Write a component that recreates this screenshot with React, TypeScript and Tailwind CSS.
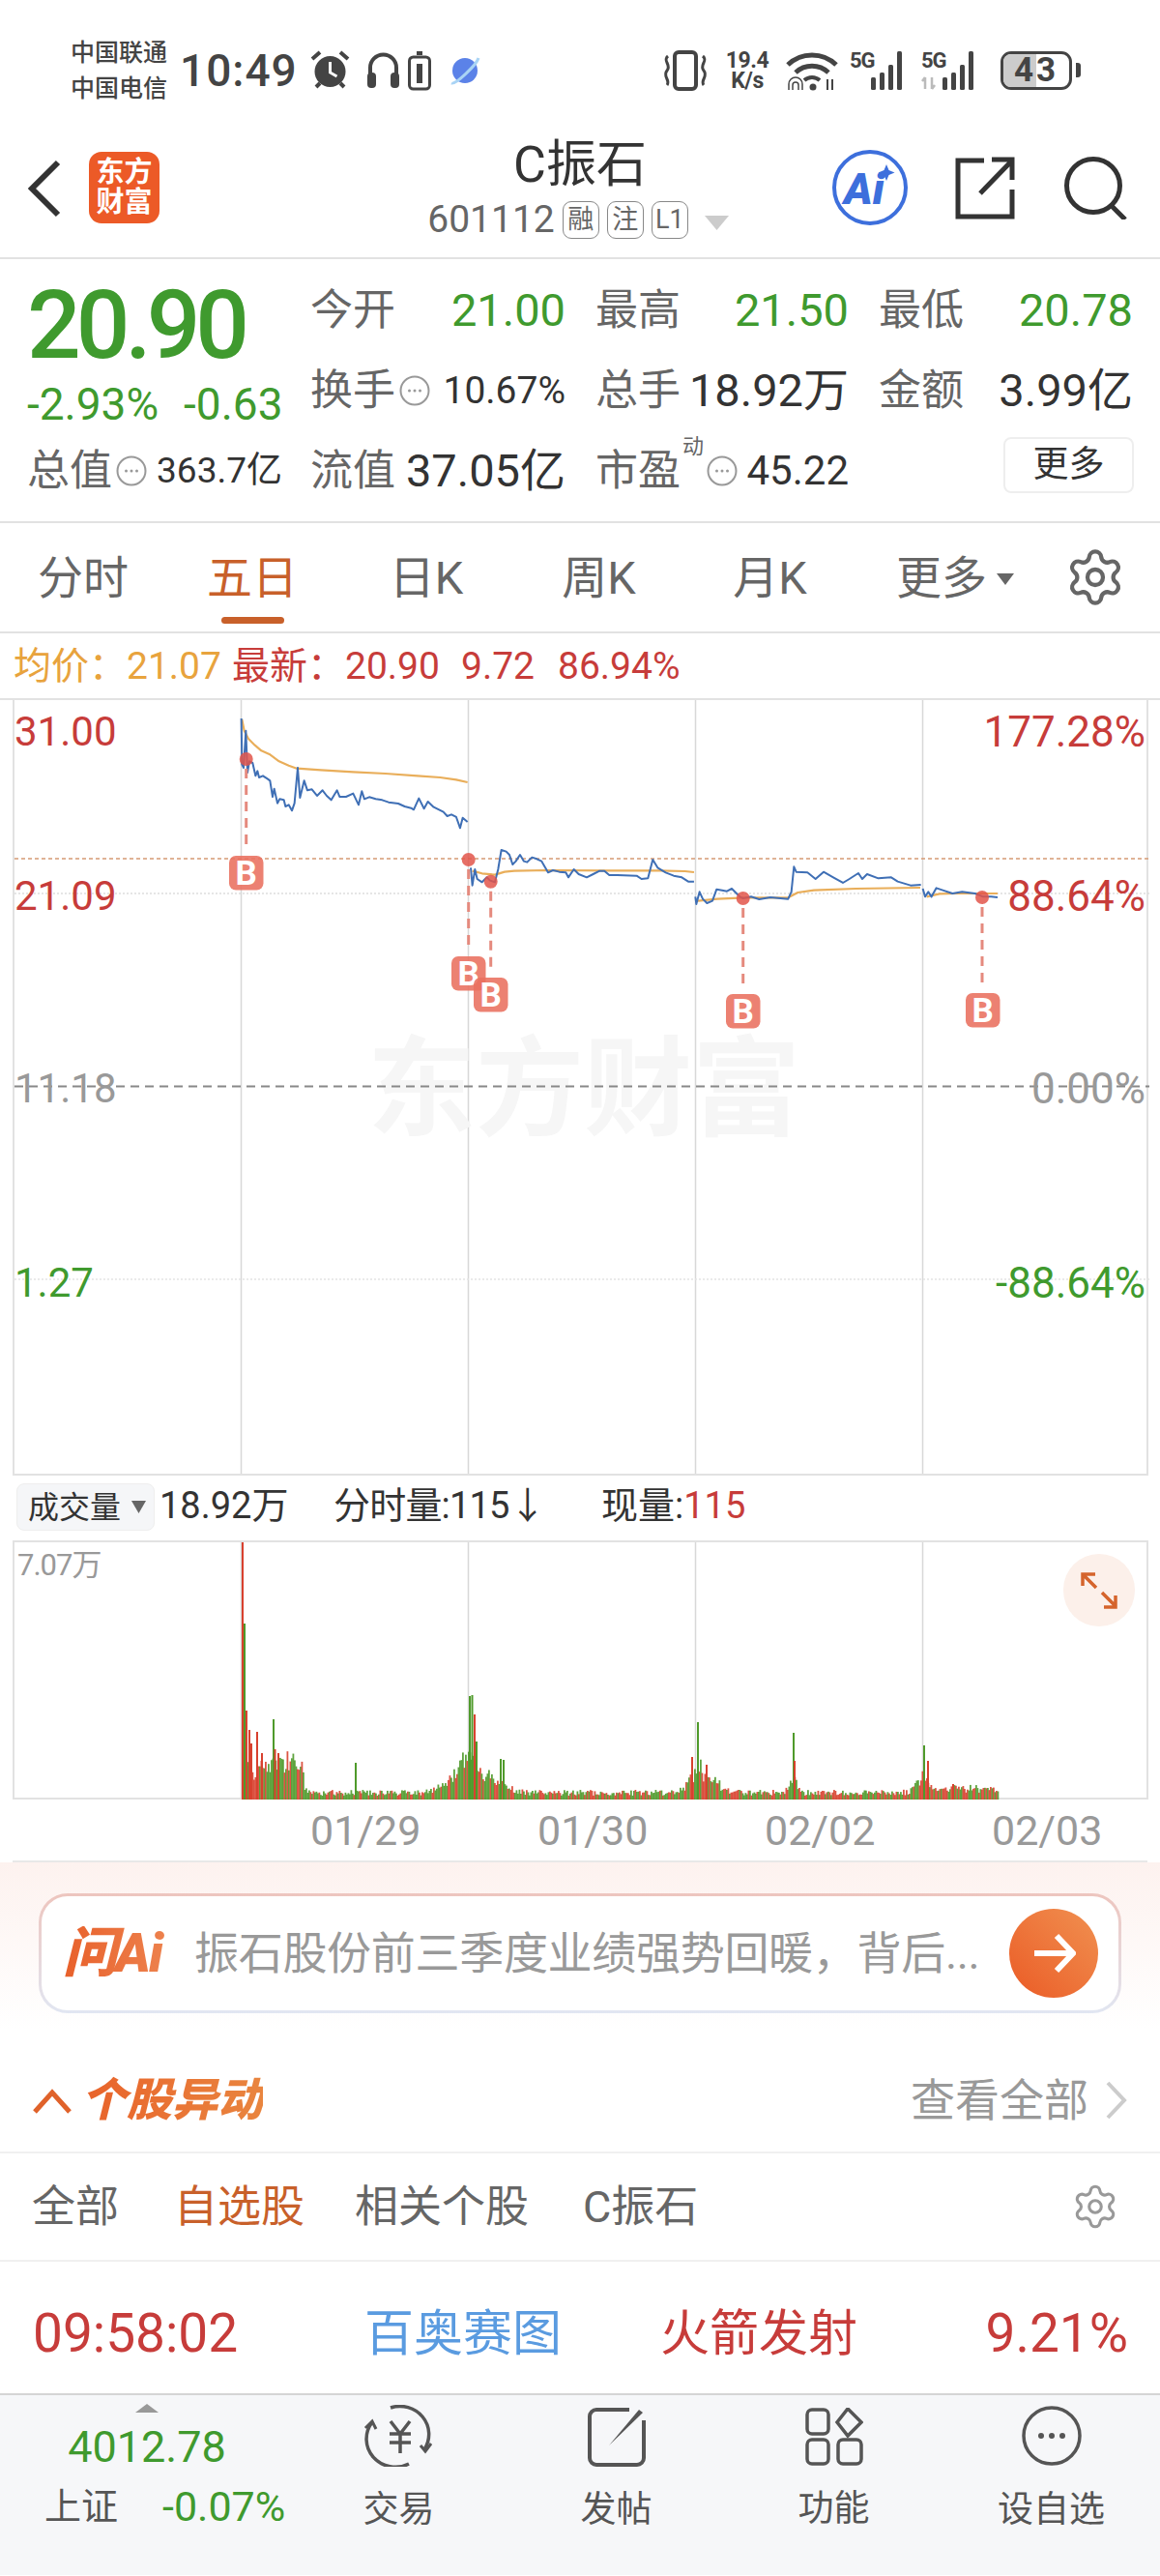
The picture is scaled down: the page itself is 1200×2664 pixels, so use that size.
import { Settings } from "lucide-react";

const RED = "#C73C3A";
const GREEN = "#3F9A2E";

// price lines, traced in crop coordinates (3x)
const blueA = "M53 72L55 215L60 225L67 110L72 240L78 205L88 210L97 250L103 235L108 255L120 250L135 260L142 265L150 315L155 290L165 335L172 322L185 325L190 345L200 340L210 358L218 335L228 225L235 318L248 265L258 295L272 292L288 312L305 295L318 312L332 325L350 295L358 315L378 315L400 305L417 340L427 298L435 322L450 316L470 322L490 325L510 332L540 336L560 345L580 350L588 355L604 320L620 352L632 330L650 347L680 362L692 375L705 370L720 378L732 412L740 380L755 393";
const orangeA = "M55 75L62 110L75 135L95 155L115 172L140 183L170 205L200 218L225 227L300 232L400 238L500 243L600 250L670 255L720 262L755 270";
const blueB = "M765 535L770 590L778 540L785 570L800 580L815 565L825 575L840 580L850 540L860 480L875 485L885 495L895 525L905 515L918 495L930 515L940 518L955 503L970 508L985 515L1005 550L1020 543L1040 548L1060 550L1068 565L1085 540L1100 555L1125 565L1145 555L1165 545L1180 545L1195 558L1220 558L1280 560L1295 570L1315 568L1330 510L1345 535L1370 550L1395 560L1420 565L1440 578L1458 578";
const orangeB = "M770 545L800 553L840 557L870 548L900 545L1000 543L1200 544L1350 544L1430 546L1458 549";
const blueC = "M52 205L55 228L65 190L75 212L88 225L105 218L118 182L135 185L150 188L165 180L180 195L190 205L200 210L225 205L250 213L285 207L340 212L350 190L358 112L365 128L400 130L425 150L450 128L480 145L510 162L530 150L558 132L570 150L585 135L620 148L660 145L680 158L720 170L752 168";
const orangeC = "M60 218L120 212L200 208L340 208L370 192L420 185L550 180L750 177";
const blueD = "M758 180L765 205L775 190L785 205L800 178L820 185L850 195L880 190L920 195L945 205L970 205L990 207";
const orangeD = "M770 205L810 196L860 195L940 195L990 195";

const trades = [
  { x: 252.7, y: 786, bx: 235, by: 886 },
  { x: 482.7, y: 890, bx: 465, by: 990 },
  { x: 505.7, y: 912.7, bx: 488, by: 1012 },
  { x: 766.7, y: 930, bx: 749, by: 1029 },
  { x: 1014, y: 929, bx: 997, by: 1028 },
];

// volume bars
let seed = 7;
const rnd = () => {
  seed = (seed * 16807) % 2147483647;
  return seed / 2147483647;
};
const bumps = [
  [295, 14, 12],
  [482, 12, 32],
  [470, 20, 20],
  [505, 18, 20],
  [719, 12, 30],
  [735, 15, 12],
  [818, 5, 24],
  [950, 8, 20],
  [975, 25, 5],
  [1012, 25, 6],
];
const spikes: [number, number, string][] = [
  [248, 266, "#D8412F"],
  [250, 182, "#4F9A2B"],
  [252, 92, "#D8412F"],
  [255, 72, "#D8412F"],
  [257, 58, "#D8412F"],
  [263, 70, "#D8412F"],
  [268, 48, "#D8412F"],
  [280, 83, "#4F9A2B"],
  [281.5, 52, "#D8412F"],
  [285, 48, "#D8412F"],
  [365, 38, "#4F9A2B"],
  [483, 107, "#4F9A2B"],
  [485.5, 108, "#4F9A2B"],
  [488, 88, "#D8412F"],
  [490, 60, "#4F9A2B"],
  [515, 42, "#4F9A2B"],
  [518, 41, "#4F9A2B"],
  [719, 80, "#4F9A2B"],
  [713, 44, "#D8412F"],
  [728, 36, "#D8412F"],
  [818, 69, "#4F9A2B"],
  [819, 40, "#D8412F"],
  [953, 56, "#4F9A2B"],
  [957, 40, "#D8412F"],
  [983, 16, "#D8412F"],
];
const bars: { x: number; h: number; c: string }[] = [];
for (let x = 248; x < 1030; x += 1.5) {
  let h = 4 + rnd() * 6;
  if (x < 312) h += 16 + rnd() * 16;
  for (const [c, w, a] of bumps) {
    const d = (x - c) / w;
    h += a * Math.exp(-d * d) * (0.4 + 0.6 * rnd());
  }
  bars.push({ x, h, c: rnd() > 0.45 ? "#4F9A2B" : "#D8412F" });
}

function Dots() {
  return (
    <svg width="32" height="32" viewBox="0 0 32 32" className="shrink-0">
      <circle cx="16" cy="16" r="14.5" fill="none" stroke="#999" strokeWidth="2" />
      <circle cx="10.5" cy="16" r="1.5" fill="#999" />
      <circle cx="16" cy="16" r="1.5" fill="#999" />
      <circle cx="21.5" cy="16" r="1.5" fill="#999" />
    </svg>
  );
}

function Signal({ arrows }: { arrows?: boolean }) {
  return (
    <div className="relative w-[64px] h-[42px]">
      <span className="absolute left-0 top-[-1px] text-[22px] leading-[24px] font-bold text-[#444] tracking-[-1px]">5G</span>
      <svg width="64" height="42" viewBox="0 0 64 42" className="absolute left-0 top-0">
        {arrows && <path d="M4 40V28M1 32l3-4M11 28v12M14 36l-3 4" stroke="#bbb" strokeWidth="2.5" fill="none" />}
        <g fill="#444">
          <rect x="22" y="28" width="5" height="13" rx="1.5" />
          <rect x="31" y="23" width="5" height="18" rx="1.5" />
          <rect x="40" y="15" width="5" height="26" rx="1.5" />
          <rect x="49" y="1" width="5" height="40" rx="1.5" />
        </g>
      </svg>
    </div>
  );
}

function StatusBar() {
  return (
    <div className="h-[125px] flex items-center pt-[20px] pl-[73px] text-[#444]">
      <div className="flex flex-col text-[25px] leading-[37px] font-medium w-[113px]">
        <span>中国联通</span>
        <span>中国电信</span>
      </div>
      <span className="text-[46px] font-medium leading-none tracking-[1px] w-[135px]">10:49</span>
      <svg width="41" height="41" viewBox="0 0 41 41" className="mr-[17px]">
        <circle cx="20.5" cy="22" r="16" fill="#444" />
        <path d="M20.5 12v11l7 4" stroke="#fff" strokeWidth="3" fill="none" />
        <path d="M2 9l8-7M39 9l-8-7M6 38l4-4M35 38l-4-4" stroke="#444" strokeWidth="4" />
      </svg>
      <svg width="35" height="40" viewBox="0 0 35 40" className="mr-[8px]">
        <path d="M4 26V17a13.5 13.5 0 0 1 27 0v9" stroke="#444" strokeWidth="4" fill="none" />
        <rect x="1" y="22" width="9" height="16" rx="4" fill="#444" />
        <rect x="25" y="22" width="9" height="16" rx="4" fill="#444" />
      </svg>
      <svg width="24" height="42" viewBox="0 0 24 42" className="mr-[19px]">
        <rect x="1.5" y="7" width="21" height="33" rx="4" fill="none" stroke="#444" strokeWidth="3" />
        <rect x="9" y="1" width="6" height="4" fill="#444" />
        <rect x="9" y="14" width="6" height="20" fill="#444" />
      </svg>
      <svg width="32" height="32" viewBox="0 0 32 32" className="mr-[187px]">
        <circle cx="16" cy="16" r="13" fill="#5B82E8" />
        <path d="M2 29C6 31 28 10 30 3" stroke="#A9D4F5" strokeWidth="3" fill="none" />
      </svg>
      <svg width="50" height="42" viewBox="0 0 50 42" className="mr-[13px]">
        <rect x="14" y="2" width="22" height="38" rx="4" fill="none" stroke="#444" strokeWidth="4" />
        <path d="M7 6c-6 5 4 9-1 15s4 10 0 15M43 6c6 5-4 9 1 15s-4 10 0 15" stroke="#444" strokeWidth="3" fill="none" />
      </svg>
      <div className="flex flex-col items-center w-[52px] mr-[13px] font-bold text-[23px] leading-[21px] tracking-[-0.5px]">
        <span>19.4</span>
        <span>K/s</span>
      </div>
      <svg width="56" height="42" viewBox="0 0 56 42" className="mr-[11px]">
        <path d="M3 15a36 36 0 0 1 50 0M11 23a25 25 0 0 1 34 0" stroke="#444" strokeWidth="5" fill="none" />
        <path d="M20 31a12 12 0 0 1 16 0" stroke="#444" strokeWidth="4" fill="none" />
        <circle cx="29" cy="38" r="3.5" fill="#444" />
        <path d="M4 41v-6a7 7 0 0 1 14 0v6M8 41v-5a3 3 0 0 1 6 0v5" stroke="#444" strokeWidth="1.5" fill="none" />
        <path d="M44 41V30M49 30v11" stroke="#444" strokeWidth="2" />
      </svg>
      <Signal />
      <div className="ml-[10px]">
        <Signal arrows />
      </div>
      <div className="relative w-[74px] h-[40px] ml-[18px] rounded-[11px] border-[3px] border-[#444] overflow-hidden bg-white">
        <div className="w-[34px] h-full bg-[#ccc]" />
        <span className="absolute inset-0 flex items-center justify-center text-[35px] font-bold tracking-[3px] leading-none">43</span>
      </div>
      <div className="w-[5px] h-[15px] ml-[4px] rounded-r-[3px] bg-[#444]" />
    </div>
  );
}

function NavBar() {
  return (
    <div className="h-[143px] flex items-start border-b-2 border-[#e2e2e2]">
      <svg width="40" height="60" viewBox="0 0 40 60" className="ml-[27px] mt-[40px] shrink-0">
        <path d="M33 3L6 30l27 27" stroke="#333" strokeWidth="6" fill="none" />
      </svg>
      <div className="ml-[25px] mt-[32px] w-[73px] h-[74px] rounded-[13px] bg-[#EC5A27] text-white flex flex-col items-center justify-center text-[29px] leading-[31px] font-bold shrink-0">
        <span>东方</span>
        <span>财富</span>
      </div>
      <div className="w-[688px] ml-[9px] pl-[164px] flex flex-col items-center">
        <span className="text-[52px] leading-[60px] mt-[16px] text-[#333]">C振石</span>
        <div className="flex items-center mt-[6px] h-[40px] text-[#666] pr-[4px]">
          <span className="text-[39px] leading-none mr-[8px]">601112</span>
          {["融", "注", "L1"].map((t) => (
            <span key={t} className="h-[39px] min-w-[38px] px-[3px] mr-[8px] rounded-[9px] border border-[#888] flex items-center justify-center text-[27px] leading-none">
              {t}
            </span>
          ))}
          <svg width="25" height="15" viewBox="0 0 25 15" className="ml-[9px] mt-[6px]">
            <path d="M0 0h25L12.5 15z" fill="#ccc" />
          </svg>
        </div>
      </div>
      <svg width="80" height="80" viewBox="0 0 80 80" className="ml-[-2px] mt-[29px] shrink-0">
        <circle cx="40" cy="40" r="37" fill="none" stroke="#3D6FDC" strokeWidth="4" />
        <text x="13" y="57" fontSize="45" fontWeight="900" fontStyle="italic" fill="#3D6FDC" fontFamily="Roboto">Ai</text>
        <path d="M57 16l2.5 6 6 2.500-6 2.500-2.500 6-2.500-6-6-2.500 6-2.500z" fill="#3D6FDC" />
      </svg>
      <svg width="63" height="65" viewBox="0 0 63 65" className="ml-[48px] mt-[37px] shrink-0">
        <path d="M30 4H3v58h56V34M26 38L59 4M38 3h21v21" stroke="#333" strokeWidth="5" fill="none" />
      </svg>
      <svg width="68" height="66" viewBox="0 0 68 66" className="ml-[49px] mt-[36px] shrink-0">
        <circle cx="31" cy="31" r="27.500" fill="none" stroke="#333" strokeWidth="5" />
        <path d="M50 52l14 14" stroke="#333" strokeWidth="5" />
      </svg>
    </div>
  );
}

function Metric({ label, value, color, small, dots, sup }: { label: string; value: string; color: string; small?: string; dots?: boolean; sup?: boolean }) {
  return (
    <div className="flex items-center">
      <span className="text-[44px] leading-[50px] text-[#666]">{label}</span>
      {sup && <span className="text-[22px] leading-[24px] text-[#666] self-start mt-[-12px] ml-[2px]">动</span>}
      {dots && (
        <span className={sup ? "ml-[3px]" : "ml-[4px]"}>
          <Dots />
        </span>
      )}
      <span className={`ml-auto leading-[50px] ${small ?? "text-[47px]"}`} style={{ color }}>
        {value}
      </span>
    </div>
  );
}

function Quote() {
  return (
    <div className="h-[273px] border-b-2 border-[#e2e2e2] pt-[13px] grid grid-cols-[321px_295px_293px_291px] grid-rows-[82px_83px_83px]">
      <div className="row-span-2 pl-[28px] flex flex-col">
        <span className="text-[98px] leading-[108px] font-medium mt-[2px] tracking-[-5px]" style={{ color: GREEN }}>20.90</span>
        <div className="flex gap-[26px] text-[46px] leading-[50px] mt-[2px]" style={{ color: GREEN }}>
          <span>-2.93%</span>
          <span>-0.63</span>
        </div>
      </div>
      <div className="pr-[31px] pt-[15px]"><Metric label="今开" value="21.00" color={GREEN} /></div>
      <div className="pr-[31px] pt-[15px]"><Metric label="最高" value="21.50" color={GREEN} /></div>
      <div className="pr-[28px] pt-[15px]"><Metric label="最低" value="20.78" color={GREEN} /></div>
      <div className="pr-[31px] pt-[16px]"><Metric label="换手" value="10.67%" color="#333" small="text-[39px]" dots /></div>
      <div className="pr-[31px] pt-[16px]"><Metric label="总手" value="18.92万" color="#333" /></div>
      <div className="pr-[28px] pt-[16px]"><Metric label="金额" value="3.99亿" color="#333" /></div>
      <div className="pl-[28px] pr-[29px] pt-[16px]"><Metric label="总值" value="363.7亿" color="#333" small="text-[37px]" dots /></div>
      <div className="pr-[31px] pt-[16px]"><Metric label="流值" value="37.05亿" color="#333" /></div>
      <div className="pr-[31px] pt-[16px]"><Metric label="市盈" value="45.22" color="#333" small="text-[42px]" dots sup /></div>
      <div className="pr-[27px] pt-[6px] flex justify-end">
        <span className="w-[135px] h-[58px] rounded-[8px] border-2 border-[#eee] flex items-center justify-center text-[37px] text-[#333]">更多</span>
      </div>
    </div>
  );
}

function Tabs() {
  const tabs = ["分时", "五日", "日K", "周K", "月K"];
  return (
    <div className="h-[114px] border-b-2 border-[#e2e2e2] grid grid-cols-[172px_178px_182px_175px_179px_204px_110px]">
      {tabs.map((t) => (
        <div key={t} className="flex flex-col items-center pt-[28px]">
          <span className={`text-[47px] leading-[58px] ${t === "五日" ? "text-[#C8602A]" : "text-[#666]"}`}>{t}</span>
          {t === "五日" && <span className="w-[65px] h-[7px] mt-[11px] rounded-full bg-[#C8602A]" />}
        </div>
      ))}
      <div className="flex items-start justify-center pt-[28px] text-[#666]">
        <span className="text-[47px] leading-[58px]">更多</span>
        <svg width="18" height="12" viewBox="0 0 18 12" className="ml-[10px] mt-[24px]">
          <path d="M0 0h18L9 12z" fill="#666" />
        </svg>
      </div>
      <div className="pl-[11px] pt-[24px]">
        <Settings size={64} strokeWidth={1.6} color="#666" />
      </div>
    </div>
  );
}

function Legend() {
  return (
    <div className="h-[69px] border-b-2 border-[#e2e2e2] pl-[14px] flex items-center text-[39px] pt-[1px]" style={{ color: RED }}>
      <span className="text-[#E8A33D] w-[226px]">均价：21.07</span>
      <span className="w-[237px]">最新：20.90</span>
      <span className="w-[100px]">9.72</span>
      <span>86.94%</span>
    </div>
  );
}

function PriceChart() {
  return (
    <div className="relative mx-[13px] w-[1175px] h-[802px] border-x-2 border-b-2 border-[#e2e2e2]">
      <svg width="1174" height="800" viewBox="13 725 1174 800" className="absolute left-0 top-0">
        {[247.5, 482.5, 717.5, 952.5].map((x) => (
          <line key={x} x1={x} x2={x} y1="725" y2="1525" stroke="#d8d8d8" strokeWidth="1.5" />
        ))}
        <text x="378" y="1167" fontSize="112" fontWeight="700" fill="#f6f6f6" fontFamily="Noto Sans CJK SC">东方财富</text>
        <line x1="13" x2="1187" y1="925" y2="925" stroke="#ddd" strokeWidth="1.5" strokeDasharray="2 2" />
        <line x1="13" x2="1187" y1="1324" y2="1324" stroke="#e4e4e4" strokeWidth="1.5" strokeDasharray="2 2" />
        <line x1="13" x2="1187" y1="1124.5" y2="1124.5" stroke="#888" strokeWidth="2" strokeDasharray="9 6" />
        <line x1="13" x2="1187" y1="889" y2="889" stroke="#D69A74" strokeWidth="1.5" strokeDasharray="4 3" />
        <g fill="none" strokeLinejoin="round">
          <g transform="translate(230 720) scale(.3333)">
            <path d={orangeA} stroke="#E9AE5A" strokeWidth="6.500" />
            <path d={orangeB} stroke="#E9AE5A" strokeWidth="6.500" />
            <path d={blueA} stroke="#3F6FB5" strokeWidth="6" />
            <path d={blueB} stroke="#3F6FB5" strokeWidth="6" />
          </g>
          <g transform="translate(700 860) scale(.3333)">
            <path d={orangeC} stroke="#E9AE5A" strokeWidth="6.500" />
            <path d={orangeD} stroke="#E9AE5A" strokeWidth="6.500" />
            <path d={blueC} stroke="#3F6FB5" strokeWidth="6" />
            <path d={blueD} stroke="#3F6FB5" strokeWidth="6" />
          </g>
        </g>
        {trades.map((t) => (
          <g key={t.x}>
            <line x1={t.x} x2={t.x} y1={t.y + 10} y2={t.by - 6} stroke="#E58A7E" strokeWidth="3" strokeDasharray="10 7" />
            <circle cx={t.x} cy={t.y} r="7" fill="#E2554A" fillOpacity=".85" />
            <rect x={t.bx} y={t.by} width="35.500" height="35.500" rx="7" fill="#E9705F" fillOpacity=".88" />
            <text x={t.bx + 17.7} y={t.by + 30} fontSize="35" fontWeight="700" fill="#fff" textAnchor="middle" fontFamily="Roboto">B</text>
          </g>
        ))}
      </svg>
      <div className="absolute inset-0 flex flex-col text-[44px] leading-[50px] pr-[1px] pt-[10px]">
        <div className="flex justify-between mt-[-2px]" style={{ color: RED }}>
          <span className="text-[42px]">31.00</span>
          <span>177.28%</span>
        </div>
        <div className="flex justify-between mt-[120px]" style={{ color: RED }}>
          <span className="text-[42px]">21.09</span>
          <span>88.64%</span>
        </div>
        <div className="flex justify-between mt-[149px] text-[#999]">
          <span className="text-[42px]">11.18</span>
          <span>0.00%</span>
        </div>
        <div className="flex justify-between mt-[151px]" style={{ color: GREEN }}>
          <span className="text-[42px]">1.27</span>
          <span>-88.64%</span>
        </div>
      </div>
    </div>
  );
}

function VolumeHead() {
  return (
    <div className="h-[67px] pl-[17px] flex items-start pt-[8px] text-[38px] leading-[46px] text-[#333]">
      <div className="w-[143px] h-[49px] rounded-[8px] border border-[#eee] bg-[#f5f6f8] flex items-center pl-[11px]">
        <span className="text-[32px] leading-none">成交量</span>
        <svg width="15" height="13" viewBox="0 0 15 13" className="ml-[11px]">
          <path d="M0 0h15L7.500 13z" fill="#666" />
        </svg>
      </div>
      <span className="ml-[5px] w-[180px]">18.92万</span>
      <span className="w-[277px] tracking-[-0.8px]">分时量:115↓</span>
      <span>现量:<span style={{ color: RED }}>115</span></span>
    </div>
  );
}

function VolumeChart() {
  return (
    <div className="relative mx-[13px] w-[1175px] h-[268px] border-x-2 border-t-2 border-b-2 border-[#e2e2e2]">
      <svg width="1174" height="266" viewBox="13 1593 1174 266" className="absolute left-0 top-0">
        {[247.5, 482.5, 717.5, 952.5].map((x) => (
          <line key={x} x1={x} x2={x} y1="1593" y2="1859" stroke="#d8d8d8" strokeWidth="1.5" />
        ))}
        {bars.map((b) => (
          <rect key={b.x} x={b.x} y={1859 - b.h} width="1.800" height={b.h} fill={b.c} fillOpacity=".9" />
        ))}
        {spikes.map(([x, h, c]) => (
          <rect key={x} x={x} y={1859 - h} width="2" height={h} fill={c} />
        ))}
      </svg>
      <span className="absolute left-[3px] top-[6px] text-[31px] leading-[36px] text-[#999] tracking-[-1px]">7.07万</span>
      <span className="absolute right-[12px] top-[12px] w-[74px] h-[75px] rounded-full bg-[#FCF0EA] flex items-center justify-center">
        <svg width="38" height="38" viewBox="0 0 38 38">
          <path d="M16 16L3 3M2 14V2h13M22 21l13 13M36 24v12H24" stroke="#D5642C" strokeWidth="3.500" fill="none" />
        </svg>
      </span>
    </div>
  );
}

function DateAxis() {
  return (
    <div className="h-[65px] mx-[13px] border-b-2 border-[#e8e8e8] grid grid-cols-[236px_235px_235px_235px_1fr] items-start pt-[8px] text-[43px] leading-[48px] text-[#999]">
      <span />
      {["01/29", "01/30", "02/02", "02/03"].map((d) => (
        <span key={d} className="pl-[72px] whitespace-nowrap">{d}</span>
      ))}
    </div>
  );
}

function AskAi() {
  return (
    <div className="h-[173px] bg-linear-to-b from-[#FDF2EF] to-white px-[40px] pt-[32px]">
      <div className="h-[124px] rounded-[30px] p-[3px] bg-linear-to-b from-[#EDC5BE] to-[#E1E6F2]">
        <div className="h-full rounded-[27px] bg-white flex items-center pl-[22px] pr-[21px]">
          <span className="w-[136px] text-[56px] leading-none font-black italic tracking-[-2px] bg-linear-to-r from-[#E8602A] to-[#EE8A55] bg-clip-text text-transparent">问Ai</span>
          <span className="flex-1 text-[46px] leading-none text-[#999] whitespace-nowrap tracking-[-0.3px]">振石股份前三季度业绩强势回暖，背后...</span>
          <span className="w-[92px] h-[92px] rounded-full bg-linear-to-tr from-[#EA5A24] to-[#F09050] flex items-center justify-center">
            <svg width="46" height="46" viewBox="0 0 46 46">
              <path d="M3 23h38M26 5l17 18-17 18" stroke="#fff" strokeWidth="6" fill="none" />
            </svg>
          </span>
        </div>
      </div>
    </div>
  );
}

function SectionHead() {
  return (
    <div className="h-[128px] border-b-2 border-[#f0f0f0] flex items-start pt-[46px] pl-[33px] pr-[33px]">
      <svg width="42" height="26" viewBox="0 0 42 26" className="mt-[15px]">
        <path d="M3 24L21 4l18 20" stroke="#E0622A" strokeWidth="5" fill="none" />
      </svg>
      <span className="ml-[9px] text-[47px] leading-[54px] font-black italic bg-linear-to-r from-[#E8622A] to-[#E9853F] bg-clip-text text-transparent">个股异动</span>
      <span className="ml-auto text-[46px] leading-[54px] text-[#999]">查看全部</span>
      <svg width="24" height="40" viewBox="0 0 24 40" className="ml-[17px] mt-[7px]">
        <path d="M3 2l17 18L3 38" stroke="#ccc" strokeWidth="4" fill="none" />
      </svg>
    </div>
  );
}

function AlertTabs() {
  return (
    <div className="h-[112px] border-b-2 border-[#f0f0f0] flex items-center pl-[33px] pr-[42px] text-[45px] leading-none text-[#666]">
      <span className="w-[147px]">全部</span>
      <span className="w-[187px] text-[#C8602A]">自选股</span>
      <span className="w-[236px]">相关个股</span>
      <span>C振石</span>
      <Settings size={50} strokeWidth={1.5} color="#999" className="ml-auto" />
    </div>
  );
}

function AlertRow() {
  return (
    <div className="h-[136px] grid grid-cols-[343px_306px_1fr_auto] items-center pl-[34px] pr-[33px] pt-[12px] leading-none" style={{ color: RED }}>
      <span className="text-[55px]">09:58:02</span>
      <span className="text-[51px] text-[#5A9BE0]">百奥赛图</span>
      <span className="text-[51px]">火箭发射</span>
      <span className="text-[55px]">9.21%</span>
    </div>
  );
}

function BottomBar() {
  return (
    <div className="h-[188px] bg-[#F6F7F9] border-t-2 border-[#d5d5d5] grid grid-cols-[300px_225px_225px_225px_225px] text-[37px] leading-[44px] text-[#555]">
      <div className="flex flex-col items-center pl-[4px]">
        <svg width="24" height="9" viewBox="0 0 24 9" className="mt-[9px]">
          <path d="M12 0l12 9H0z" fill="#999" />
        </svg>
        <span className="text-[45px] leading-[50px] mt-[11px]" style={{ color: GREEN }}>4012.78</span>
        <div className="flex items-center self-start ml-[42px] gap-[46px] mt-[14px]">
          <span className="text-[38px]">上证</span>
          <span className="text-[43px]" style={{ color: GREEN }}>-0.07%</span>
        </div>
      </div>
      <div className="flex flex-col items-center pt-[10px]">
        <svg width="74" height="64" viewBox="0 0 74 64">
          <path d="M28 3a30 29 0 0 1 35 43M47 61A30 29 0 0 1 9 18" stroke="#555" strokeWidth="3.500" fill="none" />
          <path d="M2 24l7-7 4 8M59 42l5 6 6-8" stroke="#555" strokeWidth="3" fill="none" />
          <path d="M28 17l10 13 10-13M27 30h22M27 39h22M38 30v20" stroke="#555" strokeWidth="3.500" fill="none" />
        </svg>
        <span className="mt-[23px]">交易</span>
      </div>
      <div className="flex flex-col items-center pt-[12px]">
        <svg width="62" height="62" viewBox="0 0 62 62">
          <path d="M44 3H10a7 7 0 0 0-7 7v43a7 7 0 0 0 7 7h42a7 7 0 0 0 7-7V14" stroke="#555" strokeWidth="4" fill="none" />
          <path d="M23 40L54 3l4 3z" fill="#555" />
        </svg>
        <span className="mt-[23px]">发帖</span>
      </div>
      <div className="flex flex-col items-center pt-[13px]">
        <svg width="60" height="60" viewBox="0 0 60 60">
          <g fill="none" stroke="#555" strokeWidth="3.500">
            <rect x="2" y="2" width="22" height="25" rx="5" />
            <path d="M44 1l14 14-14 14-11-14z" />
            <rect x="2" y="33" width="22" height="25" rx="5" />
            <rect x="34" y="33" width="24" height="25" rx="5" />
          </g>
        </svg>
        <span className="mt-[23px]">功能</span>
      </div>
      <div className="flex flex-col items-center pt-[11px]">
        <svg width="62" height="62" viewBox="0 0 62 62">
          <circle cx="31" cy="31" r="29" fill="none" stroke="#555" strokeWidth="3.500" />
          <circle cx="20" cy="31" r="3" fill="#555" />
          <circle cx="31" cy="31" r="3" fill="#555" />
          <circle cx="42" cy="31" r="3" fill="#555" />
        </svg>
        <span className="mt-[24px]">设自选</span>
      </div>
    </div>
  );
}

export default function App() {
  return (
    <div className="w-[1200px] h-[2664px] overflow-hidden bg-white [font-family:Roboto,'Noto_Sans_CJK_SC',sans-serif]">
      <StatusBar />
      <NavBar />
      <Quote />
      <Tabs />
      <Legend />
      <PriceChart />
      <VolumeHead />
      <VolumeChart />
      <DateAxis />
      <AskAi />
      <SectionHead />
      <AlertTabs />
      <AlertRow />
      <BottomBar />
    </div>
  );
}
